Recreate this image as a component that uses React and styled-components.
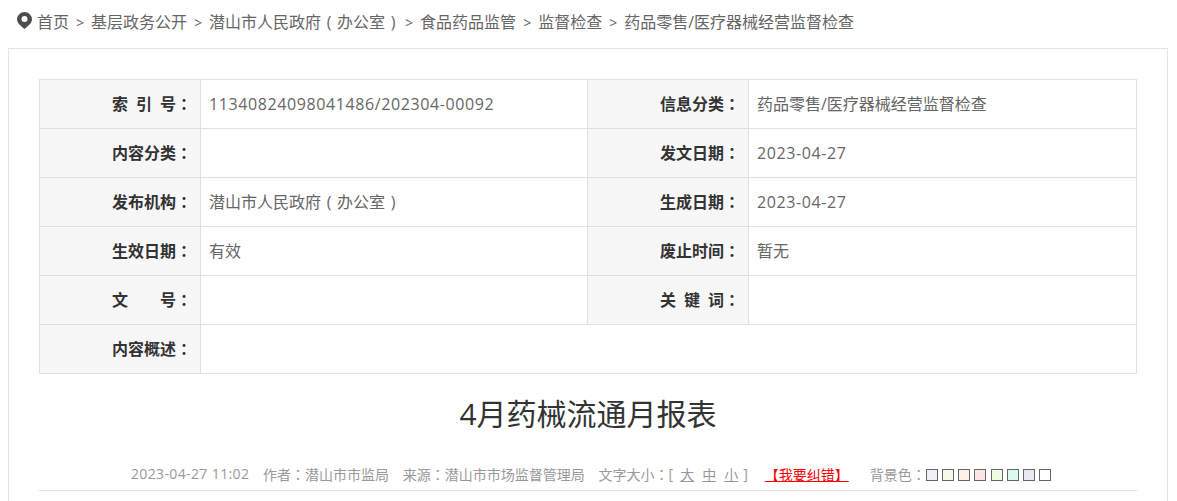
import styled, { createGlobalStyle } from "styled-components";

const GlobalStyle = createGlobalStyle`
  html, body {
    margin: 0;
    padding: 0;
    height: 501px;
    overflow: hidden;
    background: #fff;
    font-family: "Open Sans", "Noto Sans CJK SC", sans-serif;
  }
`;

const Page = styled.div`
  width: 1177px;
  height: 501px;
  overflow: hidden;
`;

const Crumbs = styled.div`
  display: flex;
  align-items: center;
  height: 48px;
  padding-left: 17px;
  padding-bottom: 7px;
  box-sizing: border-box;
  font-size: 16px;
  color: #666;
  white-space: nowrap;
`;

const PinIcon = styled.svg`
  width: 15px;
  height: 17px;
  margin-right: 5px;
  margin-top: -1px;
  fill: #4d4d4d;
`;

const Sep = styled.span`
  margin: 0 7px;
  font-size: 14px;
`;

const Panel = styled.div`
  width: 1160px;
  height: 460px;
  margin-left: 8px;
  padding: 30px 30px 0;
  box-sizing: border-box;
  border: 1px solid #e5e5e5;
`;

const InfoTable = styled.table`
  width: 1097px;
  border-collapse: collapse;
  table-layout: fixed;
  font-size: 16px;
`;

const Row = styled.tr`
  height: 49px;
`;

const Label = styled.th`
  padding: 0 8px 2px 0;
  box-sizing: border-box;
  border: 1px solid #e0e0e0;
  background: #f7f7f7;
  color: #333;
  font-size: 16px;
  font-weight: 700;
  text-align: right;
  white-space: pre;
`;

const Value = styled.td`
  padding: 0 8px ${(p) => (p.$num ? "0" : "2px")};
  border: 1px solid #e0e0e0;
  color: #666;
  white-space: nowrap;
  letter-spacing: ${(p) => (p.$num ? "0.6px" : "0")};
`;

// centred full-width colons, the SC face sets them to one side
const Colon = styled.span`
  font-family: "Noto Sans CJK TC", sans-serif;
`;

const Paren = styled.span`
  display: inline-block;
  width: 1em;
  margin-right: ${(p) => (p.$close ? "-3px" : "0")};
  text-align: center;
`;

const Title = styled.h1`
  margin: 19px 0 0;
  height: 42px;
  line-height: 42px;
  font-size: 30px;
  font-weight: 400;
  color: #333;
  text-align: center;
`;

const Meta = styled.div`
  display: flex;
  align-items: center;
  height: 27px;
  margin-top: 25px;
  padding-left: 92px;
  padding-bottom: 3px;
  border-bottom: 1px solid #e0e0e0;
  font-size: 14px;
  color: #999;
  white-space: nowrap;
`;

const MetaItem = styled.span`
  margin-right: 13.75px;
  letter-spacing: ${(p) => (p.$num ? "0.37px" : "0")};
`;

const SizeLink = styled.span`
  margin: 0 1px 0 7px;
  text-decoration: underline;
`;

const Bracket = styled.span`
  margin-left: 4px;
`;

const ReportLink = styled.span`
  margin: 0 21px 0 17px;
  color: #f00;
  text-decoration: underline;
`;

const Swatch = styled.span`
  width: 10px;
  height: 10px;
  margin: 2px 4.2px 0 0;
  border: 1px solid #666;
  background: ${(p) => p.$color};
`;

const punct = (text) =>
  text.split(/([：（）])/).map((part, i) => {
    if (part === "：") return <Colon key={i}>{part}</Colon>;
    if (part === "（") return <Paren key={i}>(</Paren>;
    if (part === "）") return <Paren key={i} $close>)</Paren>;
    return part;
  });

const rows = [
  ["索\u2002引\u2002号：", "11340824098041486/202304-00092", "信息分类：", "药品零售/医疗器械经营监督检查"],
  ["内容分类：", "", "发文日期：", "2023-04-27"],
  ["发布机构：", "潜山市人民政府（办公室）", "生成日期：", "2023-04-27"],
  ["生效日期：", "有效", "废止时间：", "暂无"],
  ["文\u3000\u3000号：", "", "关\u2002键\u2002词：", ""],
];

const crumbs = ["基层政务公开", "潜山市人民政府（办公室）", "食品药品监管", "监督检查", "药品零售/医疗器械经营监督检查"];

const swatches = ["#eef1f6", "#f6f9e8", "#fdf1e6", "#fce6e3", "#effce3", "#dcf8f1", "#e9e9ef", "#ffffff"];

const isNum = (s) => /^[\d/-]+$/.test(s);

export default function App() {
  return (
    <Page>
      <GlobalStyle />
      <Crumbs>
        <PinIcon viewBox="0 0 15 17">
          <path fillRule="evenodd" d="M7.500 0A7.500 7.500 0 0 1 15 7.500c0 3.500-4.500 7-7.500 9.500C4.500 14.500 0 11 0 7.500A7.500 7.500 0 0 1 7.500 0zm0 4a3 3 0 1 0 0 6 3 3 0 0 0 0-6z" />
        </PinIcon>
        首页
        {crumbs.map((c) => (
          <span key={c}>
            <Sep>&gt;</Sep>
            {punct(c)}
          </span>
        ))}
      </Crumbs>
      <Panel>
        <InfoTable>
          <colgroup>
            <col width="161" />
            <col width="387" />
            <col width="161" />
            <col width="388" />
          </colgroup>
          <tbody>
            {rows.map((r) => (
              <Row key={r[0]}>
                <Label>{punct(r[0])}</Label>
                <Value $num={isNum(r[1])}>{punct(r[1])}</Value>
                <Label>{punct(r[2])}</Label>
                <Value $num={isNum(r[3])}>{r[3]}</Value>
              </Row>
            ))}
            <Row>
              <Label>{punct("内容概述：")}</Label>
              <Value colSpan={3}></Value>
            </Row>
          </tbody>
        </InfoTable>
        <Title>4月药械流通月报表</Title>
        <Meta>
          <MetaItem $num>2023-04-27 11:02</MetaItem>
          <MetaItem>{punct("作者：潜山市市监局")}</MetaItem>
          <MetaItem>{punct("来源：潜山市市场监督管理局")}</MetaItem>
          {punct("文字大小：")}[
          <SizeLink>大</SizeLink>
          <SizeLink>中</SizeLink>
          <SizeLink>小</SizeLink>
          <Bracket>]</Bracket>
          <ReportLink>【我要纠错】</ReportLink>
          {punct("背景色：")}
          {swatches.map((s) => (
            <Swatch key={s} $color={s} />
          ))}
        </Meta>
      </Panel>
    </Page>
  );
}
